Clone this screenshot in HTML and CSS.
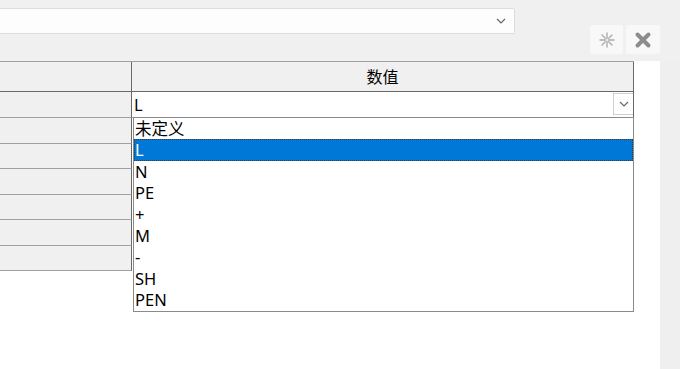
FILE: index.html
```html
<!DOCTYPE html>
<html lang="zh">
<head>
<meta charset="utf-8">
<link rel="stylesheet" href="styles.css">
</head>
<body>
<div class="top">
  <div class="combo">
    <svg class="chev" width="10" height="6" viewBox="0 0 10 6"><path d="M1 1 L5 5 L9 1" fill="none" stroke="#666" stroke-width="1.2"/></svg>
  </div>
  <div class="tools">
    <div class="btn">
      <svg width="18" height="18" viewBox="0 0 18 18"><g stroke="#a8a8a8" stroke-width="1.3" stroke-linecap="round"><path d="M9 2 V16"/><path d="M2 9 H16"/><path d="M4 4 L14 14"/><path d="M14 4 L4 14"/></g><circle cx="9" cy="9" r="2" fill="#e8e8e8" stroke="#b0b0b0" stroke-width="0.8"/></svg>
    </div>
    <div class="btn">
      <svg width="18" height="18" viewBox="0 0 18 18"><g stroke="#8c8c8c" stroke-width="4" stroke-linecap="round"><path d="M3.5 3.5 L14.5 14.5"/><path d="M14.5 3.5 L3.5 14.5"/></g></svg>
    </div>
  </div>
</div>
<div class="main">
  <div class="panel">
    <div class="table">
      <div class="hrow">
        <div class="hcell left"></div>
        <div class="hcell right">数值</div>
      </div>
      <div class="row r26">
        <div class="cell left"></div>
        <div class="cell right">
          <div class="cellcombo">
            <span class="val">L</span>
            <div class="dbtn"><svg width="10" height="6" viewBox="0 0 10 6"><path d="M1 1 L5 5 L9 1" fill="none" stroke="#666" stroke-width="1.2"/></svg></div>
          </div>
        </div>
      </div>
      <div class="row r26"><div class="cell left"></div><div class="cell right"></div></div>
      <div class="row r25"><div class="cell left"></div><div class="cell right"></div></div>
      <div class="row r26"><div class="cell left"></div><div class="cell right"></div></div>
      <div class="row r25"><div class="cell left"></div><div class="cell right"></div></div>
      <div class="row r26"><div class="cell left"></div><div class="cell right"></div></div>
      <div class="row r25"><div class="cell left"></div><div class="cell right"></div></div>
    </div>
    <ul class="list">
      <li>未定义</li>
      <li class="sel">L</li>
      <li>N</li>
      <li>PE</li>
      <li>+</li>
      <li>M</li>
      <li>-</li>
      <li>SH</li>
      <li>PEN</li>
    </ul>
  </div>
  <div class="gutter"></div>
</div>
</body>
</html>
```
FILE: styles.css
```css
html, body {
  margin: 0;
  padding: 0;
}
body {
  width: 680px;
  height: 369px;
  overflow: hidden;
  background: #f0f0f0;
  font-family: "Noto Sans", "Noto Sans CJK SC", sans-serif;
  font-size: 16.5px;
  color: #000;
}
.top {
  height: 61px;
  display: flex;
  justify-content: space-between;
  align-items: flex-start;
}
.combo {
  margin-top: 8px;
  width: 514px;
  height: 24px;
  background: #fdfdfd;
  border: 1px solid #dcdcdc;
  border-left: none;
  border-radius: 0 2px 2px 0;
  display: flex;
  justify-content: flex-end;
  align-items: center;
}
.chev {
  margin-right: 8px;
}
.tools {
  display: flex;
  gap: 3px;
  margin-top: 25px;
  margin-right: 20px;
}
.btn {
  width: 33px;
  height: 29px;
  background: #f8f8f8;
  border-radius: 3px;
  display: flex;
  align-items: center;
  justify-content: center;
}
.btn + .btn {
  width: 34px;
}
.main {
  display: flex;
  height: 308px;
}
.panel {
  position: relative;
  width: 660px;
  background: #fff;
}
.gutter {
  flex: 1;
  background: #efefef;
}
.table {
  width: 634px;
}
.hrow {
  display: grid;
  grid-template-columns: 132px 502px;
  height: 29px;
  border-top: 1px solid #a0a0a0;
  border-bottom: 1px solid #696969;
}
.hcell {
  background: #f0f0f0;
}
.hcell.left {
  border-right: 1px solid #696969;
}
.hcell.right {
  border-right: 1px solid #696969;
  display: flex;
  align-items: center;
  justify-content: center;
  font-family: "Noto Sans CJK SC", sans-serif;
  font-size: 16px;
  padding-bottom: 2px;
  box-sizing: border-box;
}
.row {
  display: grid;
  grid-template-columns: 132px 502px;
}
.r26 { height: 26px; }
.r25 { height: 25px; }
.cell.left {
  background: #f0f0f0;
  border-right: 1px solid #696969;
  border-bottom: 1px solid #a0a0a0;
}
.cell.right {
  background: #fff;
  border-right: 1px solid #696969;
}
.cellcombo {
  height: 26px;
  display: flex;
  align-items: center;
  justify-content: space-between;
  border-bottom: 1px solid #a0a0a0;
  box-sizing: border-box;
}
.val {
  padding-left: 2px;
}
.dbtn {
  width: 20px;
  height: 22px;
  box-sizing: border-box;
  border: 1px solid #d0d0d0;
  border-right: none;
  display: flex;
  align-items: center;
  justify-content: center;
  align-self: flex-start;
  margin-top: 1px;
}
.list {
  position: absolute;
  left: 133px;
  top: 56px;
  width: 499px;
  margin: 0;
  padding: 0;
  list-style: none;
  background: #fff;
  border: 1px solid #8a8a8a;
}
.list li {
  height: 21.4px;
  line-height: 22.4px;
  padding-left: 1px;
  box-sizing: border-box;
}
.list li.sel {
  background: #0078d7;
  color: #fff;
  outline: 1px dotted #3a3a3a;
  outline-offset: -1px;
}
```
